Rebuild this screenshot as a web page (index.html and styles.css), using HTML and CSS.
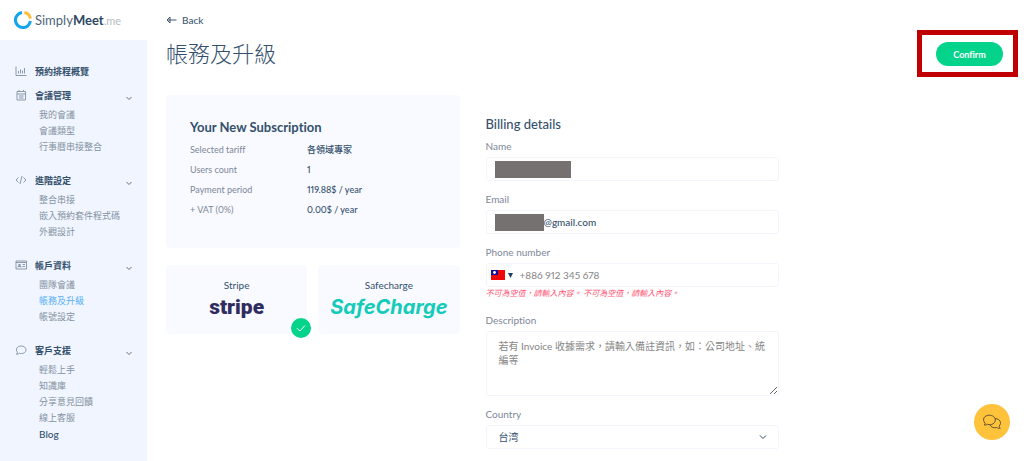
FILE: index.html
```html
<!DOCTYPE html>
<html lang="zh-Hant">
<head>
    <meta charset="UTF-8">
    <meta name="viewport" content="width=device-width, initial-scale=1.0">
    <title>帳務及升級</title>
    <link rel="stylesheet" href="styles.css">
</head>
<body>
    <aside class="sidebar">
        <a class="logo" href="#">
            <svg width="18" height="18" viewBox="0 0 18 18" fill="none" stroke-width="3">
                <path d="M8 1.6A7.5 7.5 0 1 0 16.4 10" stroke="#12a5ee"/>
                <path d="M10.3 1.6A7.5 7.5 0 0 1 16.4 7.6" stroke="#fdbf3b"/>
            </svg>
            <span>Simply<b>Meet</b><small>.me</small></span>
        </a>
        <nav class="menu">
            <a class="menu-head" href="#">
                <svg class="icon" viewBox="0 0 12 12"><path d="M1 1.5V10.5H11.5M3.5 8.5V6M5.5 8.5V4.5M7.5 8.5V5.5M9.5 8.5V3"/></svg>
                預約排程概覽
            </a>
            <div class="menu-group">
                <a class="menu-head" href="#">
                    <svg class="icon" viewBox="0 0 12 12"><path d="M2 2.5H10.5V11H2ZM2 5H10.5M4 1V3M8.5 1V3M4 7H8.5M4 9H8.5"/></svg>
                    會議管理
                    <svg class="arrow" viewBox="0 0 8 8"><path d="M1.5 3L4 5.5L6.5 3"/></svg>
                </a>
                <a href="#">我的會議</a>
                <a href="#">會議類型</a>
                <a href="#">行事曆串接整合</a>
            </div>
            <div class="menu-group">
                <a class="menu-head" href="#">
                    <svg class="icon" viewBox="0 0 12 12"><path d="M3.5 3.5L1 6L3.5 8.5M8.5 3.5L11 6L8.5 8.5M7 2L5 10"/></svg>
                    進階設定
                    <svg class="arrow" viewBox="0 0 8 8"><path d="M1.5 3L4 5.5L6.5 3"/></svg>
                </a>
                <a href="#">整合串接</a>
                <a href="#">嵌入預約套件程式碼</a>
                <a href="#">外觀設計</a>
            </div>
            <div class="menu-group">
                <a class="menu-head" href="#">
                    <svg class="icon" viewBox="0 0 12 12"><path d="M1 2H11.5V10H1ZM1 3.5H11.5M3 8.5V7.5H6V8.5M3.7 5.5H5.3V6.5H3.7ZM7.5 5.5H10M7.5 7.5H10"/></svg>
                    帳戶資料
                    <svg class="arrow" viewBox="0 0 8 8"><path d="M1.5 3L4 5.5L6.5 3"/></svg>
                </a>
                <a href="#">團隊會議</a>
                <a class="active" href="#">帳務及升級</a>
                <a href="#">帳號設定</a>
            </div>
            <div class="menu-group">
                <a class="menu-head" href="#">
                    <svg class="icon" viewBox="0 0 12 12"><path d="M1.5 10.3L2.4 8.3C0.2 5.5 2 2 6.2 2C9 2 11 3.7 11 5.8C11 8.7 7.5 10.3 4.4 9.2C3.6 9.9 2.6 10.3 1.5 10.3Z"/></svg>
                    客戶支援
                    <svg class="arrow" viewBox="0 0 8 8"><path d="M1.5 3L4 5.5L6.5 3"/></svg>
                </a>
                <a href="#">輕鬆上手</a>
                <a href="#">知識庫</a>
                <a href="#">分享意見回饋</a>
                <a href="#">線上客服</a>
                <a class="blog" href="#">Blog</a>
            </div>
        </nav>
    </aside>

    <main>
        <a class="back" href="#">
            <svg width="11" height="8" viewBox="0 0 11 8"><path d="M10.5 4H1M4 1L1 4L4 7V1"/></svg>
            Back
        </a>
        <header>
            <h1>帳務及升級</h1>
            <div class="highlight">
                <button class="confirm" type="submit" form="billing">Confirm</button>
            </div>
        </header>

        <div class="columns">
            <div>
                <section class="summary">
                    <h2>Your New Subscription</h2>
                    <table>
                        <tr><th>Selected tariff</th><td>各領域專家</td></tr>
                        <tr><th>Users count</th><td>1</td></tr>
                        <tr><th>Payment period</th><td>119.88$ / year</td></tr>
                        <tr><th>+ VAT (0%)</th><td>0.00$ / year</td></tr>
                    </table>
                </section>
                <div class="payments">
                    <label class="payment">
                        <input type="radio" name="payment" form="billing" checked>
                        Stripe
                        <span class="brand stripe">stripe</span>
                        <svg class="check" viewBox="0 0 20 20"><path d="M6 10.2L8.8 13L14 7.5"/></svg>
                    </label>
                    <label class="payment">
                        <input type="radio" name="payment" form="billing">
                        Safecharge
                        <span class="brand safecharge">SafeCharge</span>
                        <svg class="check" viewBox="0 0 20 20"><path d="M6 10.2L8.8 13L14 7.5"/></svg>
                    </label>
                </div>
            </div>

            <form class="billing" id="billing">
                <h2>Billing details</h2>
                <div class="field">
                    <label for="name">Name</label>
                    <div class="box masked">
                        <span class="mask mask-name"></span>
                        <input type="text" id="name">
                    </div>
                </div>
                <div class="field">
                    <label for="email">Email</label>
                    <div class="box masked">
                        <span class="mask mask-email"></span>
                        <input type="text" id="email" value="@gmail.com">
                    </div>
                </div>
                <div class="field">
                    <label for="phone">Phone number</label>
                    <div class="box phone">
                        <button class="flag" type="button" aria-label="Taiwan +886">
                            <svg width="14" height="10" viewBox="0 0 14 10">
                                <path fill="#f00808" d="M0 0H14V10H0Z"/>
                                <path fill="#10109a" d="M0 0H7V5H0Z"/>
                                <circle cx="3.5" cy="2.5" r="1.4" fill="#fff"/>
                            </svg>
                            <svg width="5" height="5" viewBox="0 0 5 5"><path fill="#1f3d5c" d="M0 0H5L2.5 5Z"/></svg>
                        </button>
                        <input type="tel" id="phone" placeholder="+886 912 345 678">
                    </div>
                    <p class="error">不可為空值，請輸入內容。 不可為空值，請輸入內容。</p>
                </div>
                <div class="field">
                    <label for="description">Description</label>
                    <textarea class="box" id="description" placeholder="若有 Invoice 收據需求，請輸入備註資訊，如：公司地址、統編等"></textarea>
                </div>
                <div class="field">
                    <label for="country">Country</label>
                    <div class="box country">
                        <select id="country"><option>台湾</option></select>
                        <svg width="8" height="8" viewBox="0 0 8 8"><path d="M1 2.5L4 5.5L7 2.5"/></svg>
                    </div>
                </div>
            </form>
        </div>
    </main>

    <button class="chat" type="button" aria-label="Chat">
        <svg width="20" height="16" viewBox="0 0 20 16">
            <path d="M2 10.8C3 10.4 3.3 9.8 3 9C-0.2 5.5 2.3 1.2 7.2 1.2C10.8 1.2 13.3 3.3 13.3 6C13.3 9.4 9.6 11.5 5.6 10.3C4.5 11 3.2 11.1 2 10.8Z"/>
            <path d="M13.1 4.6C17.9 4.6 20.1 8.9 17.2 12C17 13 17.4 13.6 18.3 14.2C17 14.5 15.7 14.2 14.6 13.5C11.7 14.3 9 13.2 8 11"/>
        </svg>
    </button>
</body>
</html>
```
FILE: styles.css
```css
* {
    margin: 0;
    padding: 0;
    box-sizing: border-box;
}

body {
    display: flex;
    min-height: 100vh;
    font-family: Lato, "Noto Sans CJK TC", sans-serif;
    font-size: 10px;
    font-variant-ligatures: none;
    font-variant-numeric: proportional-nums;
    color: #34506c;
    background-color: #fff;
}

a {
    color: inherit;
    text-decoration: none;
}

svg {
    flex: none;
    fill: none;
    stroke-linejoin: round;
}

input,
select,
textarea,
button {
    font: inherit;
    color: inherit;
    border: none;
    outline: none;
    background: none;
}

/* Sidebar */
.sidebar {
    display: flex;
    flex-direction: column;
    flex: none;
    width: 147px;
}

.logo {
    display: flex;
    align-items: center;
    gap: 3px;
    height: 40px;
    padding-left: 14px;
    font-size: 13px;
    color: #4d6379;
}

.logo b {
    color: #2c4762;
}

.logo small {
    font-size: 11px;
    color: #b4bcc6;
}

.menu {
    flex: 1;
    padding: 19px 14px 20px 15px;
    font-size: 9px;
    background-color: #f0f5ff;
}

.menu-head {
    display: flex;
    align-items: center;
    height: 24px;
    font-weight: bold;
}

.menu-group {
    margin-bottom: 13px;
}

.menu-group a:not(.menu-head) {
    display: block;
    padding-left: 24px;
    line-height: 16px;
    color: #8592a1;
}

.menu-group a.active {
    color: #59b0f5;
}

.menu-group a.blog {
    color: #34506c;
    font-size: 10px;
    font-weight: 500;
}

.icon {
    width: 12px;
    height: 12px;
    margin-right: 8px;
    stroke: #8b99aa;
}

.arrow {
    width: 8px;
    height: 8px;
    margin-top: 6px;
    margin-left: auto;
    stroke: #5d7288;
}

/* Main */
main {
    flex: 1;
    padding: 10px 6px 11px 19px;
}

.back {
    display: inline-flex;
    align-items: center;
    gap: 5px;
    height: 20px;
    vertical-align: top;
    font-weight: 500;
    color: #40586f;
}

.back svg {
    stroke: #40586f;
}

header {
    display: flex;
    align-items: center;
    justify-content: space-between;
    margin-bottom: 18px;
}

h1 {
    font-size: 22px;
    font-weight: 300;
    line-height: 32px;
}

.highlight {
    padding: 7px 10px 6px 14px;
    border: 5px solid #c00000;
}

.confirm {
    display: block;
    width: 67px;
    height: 24px;
    border-radius: 12px;
    font-size: 9px;
    font-weight: bold;
    color: #fff;
    background-color: #04d48b;
}

.columns {
    display: grid;
    grid-template-columns: 1fr 1fr;
    gap: 26px;
    max-width: 613px;
}

h2 {
    font-size: 13px;
    font-weight: bold;
    line-height: 20px;
}

.summary {
    padding: 22px 24px 28px;
    border-radius: 4px;
    background-color: #f8faff;
}

.summary table {
    width: 100%;
    margin-top: 3px;
    border-collapse: collapse;
}

.summary th,
.summary td {
    height: 20px;
    line-height: 20px;
    text-align: left;
    white-space: nowrap;
}

.summary th {
    width: 117px;
    font-size: 9px;
    font-weight: normal;
    color: #7d8798;
}

.summary td {
    font-size: 9px;
    font-weight: 500;
}

.payments {
    display: grid;
    grid-template-columns: 1fr 1fr;
    gap: 11px;
    margin-top: 17px;
}

.payment {
    position: relative;
    padding: 13px 0 12px;
    border-radius: 5px;
    text-align: center;
    line-height: 14px;
    background-color: #f8faff;
}

.payment input {
    position: absolute;
    opacity: 0;
}

.brand {
    display: block;
    line-height: 30px;
}

.stripe {
    font-family: Roboto, sans-serif;
    font-size: 21px;
    font-weight: 900;
    color: #302d5e;
}

.safecharge {
    font-family: Inter, sans-serif;
    font-size: 20px;
    font-style: italic;
    font-weight: bold;
    color: #14cbb9;
}

.check {
    display: none;
    position: absolute;
    right: -4px;
    bottom: -4px;
    width: 20px;
    height: 20px;
    border-radius: 50%;
    stroke: #fff;
    background-color: #04d48b;
}

.payment input:checked ~ .check {
    display: block;
}

/* Billing form */
.billing {
    padding-top: 19px;
}

.billing h2 {
    margin-bottom: 6px;
    font-weight: 500;
}

.field {
    margin-bottom: 12px;
}

.field label {
    display: block;
    margin-bottom: 4px;
    line-height: 13px;
    color: #7d8798;
}

.box {
    display: flex;
    align-items: center;
    width: 100%;
    height: 24px;
    padding: 0 8px;
    border: 1px solid #f3f5fc;
    border-radius: 3px;
}

.box input,
.box select {
    flex: 1;
    min-width: 0;
    height: 22px;
}

.mask {
    flex: none;
    height: 17px;
    background-color: #767171;
}

.mask-name {
    width: 76px;
}

.mask-email {
    width: 49px;
}

.masked input {
    font-weight: 500;
}

.phone {
    padding: 0 4px;
}

.flag {
    display: flex;
    align-items: center;
    gap: 3px;
    margin-right: 7px;
}

::placeholder {
    color: #858585;
    opacity: 1;
}

.error {
    height: 15px;
    font-size: 8px;
    font-style: italic;
    line-height: 13px;
    white-space: nowrap;
    color: #ff5878;
}

textarea.box {
    display: block;
    height: 65px;
    padding: 7px 12px;
    line-height: 14px;
    resize: vertical;
}

.country {
    padding: 0 11px 0 12px;
}

.country select {
    appearance: none;
}

.country svg {
    stroke: #2f4a66;
}

/* Chat bubble */
.chat {
    display: flex;
    align-items: center;
    justify-content: center;
    position: fixed;
    right: 14px;
    bottom: 21px;
    width: 36px;
    height: 36px;
    border-radius: 50%;
    background-color: #fec33b;
}

.chat svg {
    stroke: #5e5130;
}
```
